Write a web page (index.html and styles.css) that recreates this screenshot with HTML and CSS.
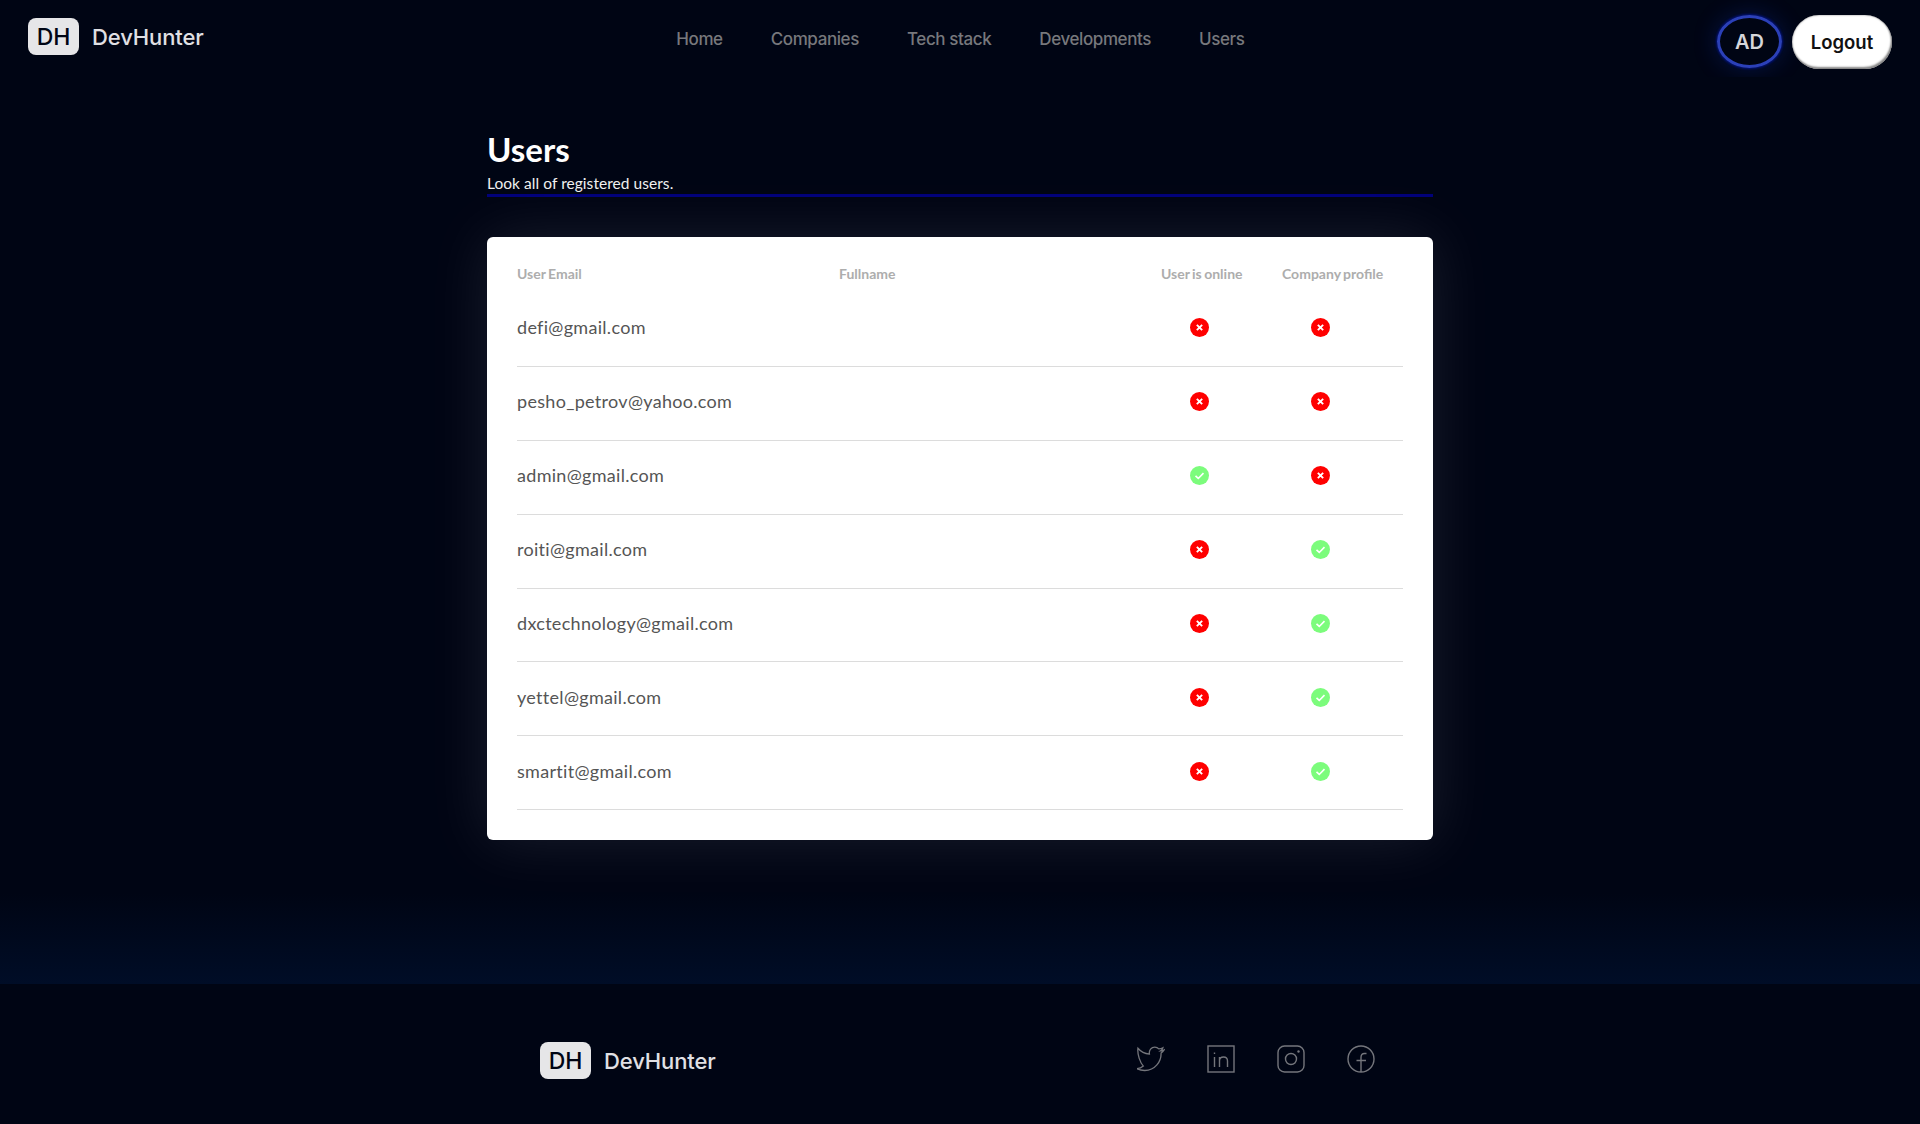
FILE: index.html
```html
<!DOCTYPE html>
<html lang="en">
<head>
    <meta charset="UTF-8">
    <meta name="viewport" content="width=device-width, initial-scale=1.0">
    <title>Users - DevHunter</title>
    <link rel="stylesheet" href="styles.css">
</head>
<body>
    <svg class="icon-defs" width="0" height="0">
        <symbol id="icon-no" viewBox="0 0 20 20">
            <circle cx="10" cy="10" r="10" fill="#ff0000"/>
            <path d="M7.2 7.2l5.6 5.6M12.8 7.2l-5.6 5.6" stroke="#fff" stroke-width="2" fill="none"/>
        </symbol>
        <symbol id="icon-yes" viewBox="0 0 20 20">
            <circle cx="10" cy="10" r="10" fill="#7cfc7c"/>
            <path d="M5.8 10.4l2.9 2.7 5.5-5.6" stroke="#fff" stroke-width="1.7" fill="none"/>
        </symbol>
    </svg>

    <header class="topbar">
        <a class="brand">
            <span class="brand-badge">DH</span>
            <span class="brand-name">DevHunter</span>
        </a>
        <nav class="topnav">
            <a>Home</a>
            <a>Companies</a>
            <a>Tech stack</a>
            <a>Developments</a>
            <a>Users</a>
        </nav>
        <div class="topbar-actions">
            <div class="avatar">AD</div>
            <button class="logout-btn">Logout</button>
        </div>
    </header>

    <main class="page">
        <div class="page-head">
            <h1>Users</h1>
            <p>Look all of registered users.</p>
        </div>

        <section class="users-card">
            <div class="users-row users-head">
                <div>User Email</div>
                <div>Fullname</div>
                <div>User is online</div>
                <div>Company profile</div>
            </div>
            <div class="users-row">
                <div class="user-email">defi@gmail.com</div>
                <div></div>
                <div><svg class="status"><use href="#icon-no"/></svg></div>
                <div><svg class="status"><use href="#icon-no"/></svg></div>
            </div>
            <div class="users-row">
                <div class="user-email">pesho_petrov@yahoo.com</div>
                <div></div>
                <div><svg class="status"><use href="#icon-no"/></svg></div>
                <div><svg class="status"><use href="#icon-no"/></svg></div>
            </div>
            <div class="users-row">
                <div class="user-email">admin@gmail.com</div>
                <div></div>
                <div><svg class="status"><use href="#icon-yes"/></svg></div>
                <div><svg class="status"><use href="#icon-no"/></svg></div>
            </div>
            <div class="users-row">
                <div class="user-email">roiti@gmail.com</div>
                <div></div>
                <div><svg class="status"><use href="#icon-no"/></svg></div>
                <div><svg class="status"><use href="#icon-yes"/></svg></div>
            </div>
            <div class="users-row">
                <div class="user-email">dxctechnology@gmail.com</div>
                <div></div>
                <div><svg class="status"><use href="#icon-no"/></svg></div>
                <div><svg class="status"><use href="#icon-yes"/></svg></div>
            </div>
            <div class="users-row">
                <div class="user-email">yettel@gmail.com</div>
                <div></div>
                <div><svg class="status"><use href="#icon-no"/></svg></div>
                <div><svg class="status"><use href="#icon-yes"/></svg></div>
            </div>
            <div class="users-row">
                <div class="user-email">smartit@gmail.com</div>
                <div></div>
                <div><svg class="status"><use href="#icon-no"/></svg></div>
                <div><svg class="status"><use href="#icon-yes"/></svg></div>
            </div>
        </section>
    </main>

    <footer class="footer">
        <a class="brand">
            <span class="brand-badge">DH</span>
            <span class="brand-name">DevHunter</span>
        </a>
        <div class="socials">
            <!-- twitter -->
            <svg viewBox="0 0 30 30">
                <path d="M1 3.500c3 3.600 6.700 5.800 12.300 6.200-.7-4 2-7.400 5.800-7.400 1.800 0 3.200.7 4.300 1.900 1.600-.2 3-.6 4.300-1.300-.4 1.500-1.200 2.600-2.400 3.400 1.300-.1 2.500-.4 3.600-.9-.9 1.300-1.900 2.300-3.100 3.200.3 9-6.400 18.700-17.500 18.700-3.100 0-5.700-.5-8.500-1.900 2.500-.2 5-1.100 7-2.800C3.500 19 .2 10.500 1 3.500z"/>
            </svg>
            <!-- linkedin -->
            <svg viewBox="0 0 28 28">
                <rect x="1" y="1" width="26" height="26"/>
                <path d="M7.500 12v10M7.500 7.500v1.500M12.500 22V12M12.500 16c0-2.500 1.800-4 4-4s4 1.500 4 4v6"/>
            </svg>
            <!-- instagram -->
            <svg viewBox="0 0 28 28">
                <rect x="1" y="1" width="26" height="26" rx="6.500"/>
                <circle cx="14" cy="14" r="5.500"/>
                <circle class="dot" cx="21.500" cy="6.500" r="1.200"/>
            </svg>
            <!-- facebook -->
            <svg viewBox="0 0 28 28">
                <circle cx="14" cy="14" r="13"/>
                <path d="M14 27V12.500c0-2.700 1.500-4 3.500-4h2M9.500 15.500h9.500"/>
            </svg>
        </div>
    </footer>
</body>
</html>
```

FILE: styles.css
```css
* {
    margin: 0;
    padding: 0;
    box-sizing: border-box;
}

body {
    background: #000514;
    color: #fff;
    font-family: 'Lato', 'Liberation Sans', sans-serif;
    height: 100vh;
    display: flex;
    flex-direction: column;
    overflow: hidden;
}

.icon-defs {
    position: absolute;
}

/* Top bar */
.topbar {
    height: 77px;
    flex-shrink: 0;
    display: flex;
    align-items: flex-start;
    justify-content: space-between;
    padding: 15px 28px 0 28px;
}

.brand {
    display: flex;
    align-items: center;
    gap: 13px;
}

.topbar .brand {
    margin-top: 3px;
}

.brand-badge {
    width: 51px;
    height: 37px;
    border-radius: 8px;
    background: #e6e6e8;
    color: #000514;
    font-family: 'Inter', sans-serif;
    font-size: 23px;
    font-weight: 500;
    display: flex;
    align-items: center;
    justify-content: center;
}

.brand-name {
    margin-top: 1px;
    font-family: 'Inter', sans-serif;
    font-size: 22px;
    font-weight: 500;
    color: #e0e0e4;
    letter-spacing: -0.1px;
}

.topnav {
    display: flex;
    gap: 48px;
    margin-top: 13px;
}

.topnav a {
    font-family: 'Inter', sans-serif;
    font-size: 17px;
    font-weight: 500;
    line-height: 22px;
    color: #77787c;
    letter-spacing: -0.4px;
}

.topbar-actions {
    display: flex;
    gap: 10px;
}

.avatar {
    width: 65px;
    height: 53px;
    border: 3px solid #2b40b8;
    border-radius: 50%;
    box-shadow: 0 0 2px 1px #00107a, 0 0 24px rgba(20, 60, 200, 0.3);
    display: flex;
    align-items: center;
    justify-content: center;
    color: #d6d6da;
    font-family: 'Inter', sans-serif;
    font-size: 20px;
    font-weight: 600;
}

.logout-btn {
    width: 100px;
    height: 54px;
    border: none;
    border-radius: 27px;
    background: #fff;
    box-shadow: inset 0 0 2px #777, inset -1px -2px 2px #8a8a8a;
    color: #111;
    font-family: 'Inter', sans-serif;
    font-size: 18.5px;
    font-weight: 600;
}

/* Page body */
.page {
    flex: 1;
    background: linear-gradient(to bottom, #000514 0%, #000514 90%, #000d27 100%);
    display: flex;
    flex-direction: column;
    align-items: center;
}

.page-head {
    width: 946px;
    margin-top: 54px;
    padding-bottom: 1px;
    border-bottom: 3px solid #00007a;
}

.page-head h1 {
    font-family: 'Lato', sans-serif;
    font-size: 33px;
    font-weight: 700;
    line-height: 36px;
}

.page-head p {
    font-size: 15.5px;
    line-height: 20px;
    margin-top: 6px;
    color: #f0f0f0;
    letter-spacing: 0.05px;
}

.users-card {
    width: 946px;
    margin-top: 40px;
    padding: 30px;
    background: #fff;
    border-radius: 6px;
    box-shadow: 0 0 60px rgba(255, 255, 255, 0.1);
}

.users-row {
    display: grid;
    grid-template-columns: 322px 322px 121px 1fr;
    align-items: center;
    height: 73.9px;
    padding-bottom: 3px;
    border-bottom: 1px solid #dcdcdc;
}

.users-head {
    height: 26px;
    padding-bottom: 13px;
    border-bottom: none;
    font-size: 14px;
    font-weight: 700;
    line-height: 12px;
    color: #adadad;
    word-spacing: -1px;
}

.user-email {
    margin-top: -1px;
    font-size: 18px;
    color: #555;
    letter-spacing: 0.3px;
}

.status {
    display: block;
    width: 19px;
    height: 19px;
    margin-left: 29px;
}

/* Footer */
.footer {
    height: 140px;
    flex-shrink: 0;
    background: #000514;
    display: flex;
    justify-content: space-between;
    padding: 58px 545px 0 540px;
}

.footer .brand {
    align-self: flex-start;
}

.socials {
    display: flex;
    gap: 42px;
    margin-top: 3px;
}

.socials svg {
    width: 28px;
    height: 28px;
    fill: none;
    stroke: #74767c;
    stroke-width: 1.400;
}

.socials .dot {
    fill: #74767c;
    stroke: none;
}
```
